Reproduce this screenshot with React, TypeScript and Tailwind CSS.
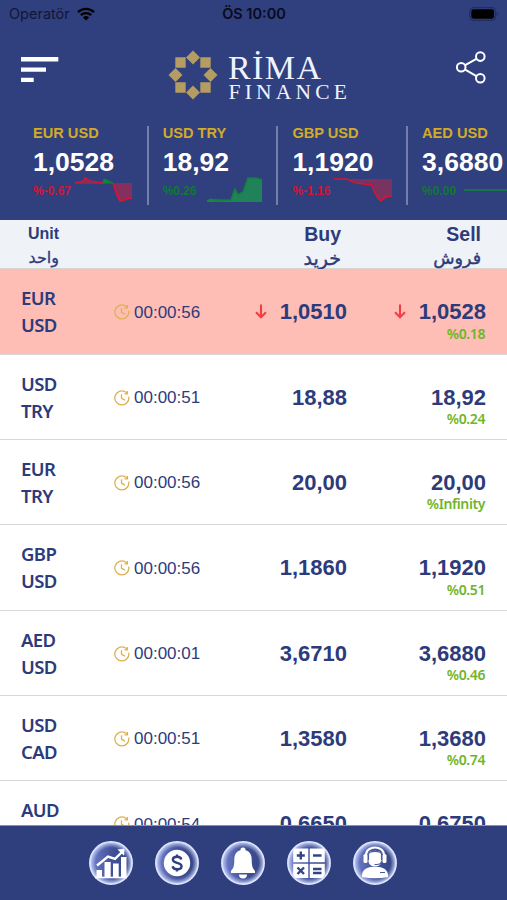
import type { ReactNode } from "react";

const tickers = [
  {
    pair: "EUR USD",
    price: "1,0528",
    change: "%-0.67",
    up: false,
    chart: (
      <>
        <path d="M38 5H57V21L51 21 46 24 42 18Z" fill="#a82a50" fillOpacity=".7" />
        <path d="M0 5 4 4 6 4 8 3 10 0 15 3 28 5 28 6 3 6Z" fill="#c0233f" fillOpacity=".6" />
        <path d="M0 5 5 4 8 3 10 0 15 3 28 5M38 5 42 17 45 23 50 22 53 20 57 21" fill="none" stroke="#d21634" strokeWidth="1.7" />
        <path d="M28 5 29 1 34 3 38 5Z" fill="#128538" stroke="#128538" />
      </>
    ),
  },
  {
    pair: "USD TRY",
    price: "18,92",
    change: "%0.26",
    up: true,
    chart: (
      <>
        <path d="M2 23 6 21 26 22 30 11 33 17 38 14 43 0 57 1 57 24 2 24Z" fill="#1f8259" />
        <path d="M2 23 6 21 9 23 26 22 30 11 33 17 38 14 43 0 51 0 57 2" fill="none" stroke="#128538" strokeWidth="1.5" />
      </>
    ),
  },
  {
    pair: "GBP USD",
    price: "1,1920",
    change: "%-1.16",
    up: false,
    chart: (
      <>
        <path d="M0 1H58V17L53 19 48 23 43 18 39 6 25 5 15 2Z" fill="#9a2d55" fillOpacity=".7" />
        <path d="M0 1 13 1 17 3 22 5 38 7 41 15 44 20 47 23 51 19 58 18" fill="none" stroke="#d21634" strokeWidth="1.7" />
      </>
    ),
  },
  {
    pair: "AED USD",
    price: "3,6880",
    change: "%0.00",
    up: true,
    chart: <path d="M0 12H57" stroke="#128538" strokeWidth="1.3" />,
  },
];

const rates = [
  { from: "EUR", to: "USD", time: "00:00:56", buy: "1,0510", sell: "1,0528", diff: "%0.18", falling: true },
  { from: "USD", to: "TRY", time: "00:00:51", buy: "18,88", sell: "18,92", diff: "%0.24" },
  { from: "EUR", to: "TRY", time: "00:00:56", buy: "20,00", sell: "20,00", diff: "%Infinity" },
  { from: "GBP", to: "USD", time: "00:00:56", buy: "1,1860", sell: "1,1920", diff: "%0.51" },
  { from: "AED", to: "USD", time: "00:00:01", buy: "3,6710", sell: "3,6880", diff: "%0.46" },
  { from: "USD", to: "CAD", time: "00:00:51", buy: "1,3580", sell: "1,3680", diff: "%0.74" },
  { from: "AUD", to: "", time: "00:00:54", buy: "0,6650", sell: "0,6750", diff: "" },
];

function StatusBar() {
  return (
    <div className="grid h-[28px] shrink-0 grid-cols-3 items-center pl-[9px] pr-[7px] text-black">
      <div className="flex items-center gap-[7px]">
        <span className="font-[Inter,sans-serif] text-[14.5px] text-[#111735]">Operatör</span>
        <svg width="18" height="14" viewBox="0 0 18 14" fill="none" stroke="currentColor">
          <path d="M1 5.1a11.5 11.5 0 0 1 16 0" strokeWidth="2.4" />
          <path d="M3.8 8.2a7.5 7.5 0 0 1 10.4 0" strokeWidth="2.3" />
          <path d="M9 13.6 5.9 10.5a4.5 4.5 0 0 1 6.2 0Z" fill="currentColor" stroke="none" />
        </svg>
      </div>
      <div className="pb-px pr-px text-center font-[Inter,sans-serif] text-[14.5px] font-semibold text-[#080b1c]">ÖS 10:00</div>
      <div className="flex justify-end">
        <svg width="31" height="14" viewBox="0 0 31 14">
          <rect x=".7" y=".7" width="26" height="12.6" rx="4" fill="none" stroke="#222d5c" strokeWidth="1.2" />
          <rect x="2.3" y="2.3" width="22.8" height="9.4" rx="2.4" />
          <path d="M28.5 5v4q2-2 0-4" fill="#222d5c" />
        </svg>
      </div>
    </div>
  );
}

function Logo() {
  return (
    <svg width="182" height="54" viewBox="0 0 182 54">
      <g fill="#b49c62">
        <path d="M25 .5 32 7.5 25 14.5 18 7.5Z" />
        <path d="M25 35.5 32 42.5 25 49.5 18 42.5Z" />
        <path d="M7.5 18 14.5 25 7.5 32 .5 25Z" />
        <path d="M42.5 18 49.5 25 42.5 32 35.5 25Z" />
        <path d="M7.3 7.3h10.4v10.4H7.3zM32.3 7.3h10.4v10.4H32.3zM7.3 32.3h10.4v10.4H7.3zM32.3 32.3h10.4v10.4H32.3z" />
      </g>
      <g fill="#f0f3ff" className="font-['Liberation_Serif',serif]">
        <text x="60" y="29" fontSize="34" textLength="93">RİMA</text>
        <text x="60.5" y="49" fontSize="21.5" textLength="118.5">FINANCE</text>
      </g>
    </svg>
  );
}

function Header() {
  return (
    <header className="flex h-[84px] shrink-0 items-start justify-between pl-[21px] pr-[20px] pt-[22px]">
      <svg className="mt-[7px]" width="38" height="26" viewBox="0 0 38 26" fill="#fff">
        <path d="M0 0h37.3v4.6H0zM0 10.4h25v4.4H0zM0 20.7h12.7V25H0z" />
      </svg>
      <div className="ml-[109px]">
        <Logo />
      </div>
      <svg className="ml-auto mt-[1px]" width="31" height="33" viewBox="0 0 31 33" fill="none" stroke="#fff" strokeWidth="2">
        <circle cx="5.2" cy="16.3" r="4.3" />
        <circle cx="24.3" cy="5.6" r="4.3" />
        <circle cx="24.3" cy="27.3" r="4.3" />
        <path d="m9.2 14.1 11.2-6.3M9.2 18.7l11.2 6.4" />
      </svg>
    </header>
  );
}

function TickerStrip() {
  return (
    <div className="flex h-[108px] shrink-0 overflow-hidden pl-[33px] pt-[14px]">
      {tickers.map((t, i) => (
        <div
          key={t.pair}
          className={`h-[79px] shrink-0 ${i > 0 ? "w-[129.7px] border-l-2 border-[#7580aa] pl-[14px]" : "w-[113.7px]"}`}
        >
          <div className="h-[17px] pt-px text-[14.6px] font-bold leading-[13px] text-[#d2ab28]">{t.pair}</div>
          <div className="h-[34px] pt-[4px] text-[26.5px] font-bold leading-[30px] text-white">{t.price}</div>
          <div className="flex h-[26px] items-start">
            <span
              className={`w-[42px] shrink-0 whitespace-nowrap pt-[7px] text-[12px] font-bold leading-[14px] ${t.up ? "text-[#0e7a31]" : "text-[#d21634]"}`}
            >
              {t.change}
            </span>
            <svg className="mt-[1px] shrink-0 overflow-visible" width="58" height="25" viewBox="0 0 58 25">
              {t.chart}
            </svg>
          </div>
        </div>
      ))}
    </div>
  );
}

function TableHead() {
  return (
    <div className="flex h-[49.4px] shrink-0 justify-between border-b border-[#d8d3d0] bg-[#eff2f7] pl-[27px] pr-[26px] font-bold">
      <div className="w-[32px] text-right text-[16px]">
        <div className="h-[27px] leading-[28px]">Unit</div>
        <div
          className="whitespace-nowrap font-['DejaVu_Sans',sans-serif] text-[16px] font-normal leading-[22px] [-webkit-text-stroke:0.3px]"
          dir="rtl"
        >
          واحد
        </div>
      </div>
      <div className="flex">
        <div className="w-[140px] text-right text-[19.5px]">
          <div className="h-[27px] leading-[28px]">Buy</div>
          <div className="font-['DejaVu_Sans',sans-serif] text-[19px] font-normal leading-[22px] [-webkit-text-stroke:0.4px]">خرید</div>
        </div>
        <div className="w-[140px] text-right text-[19.5px]">
          <div className="h-[27px] leading-[28px]">Sell</div>
          <div className="font-['DejaVu_Sans',sans-serif] text-[17.5px] font-normal leading-[22px] [-webkit-text-stroke:0.4px]">فروش</div>
        </div>
      </div>
    </div>
  );
}

function ClockIcon() {
  return (
    <svg width="16" height="16" viewBox="0 0 16 16" fill="none" stroke="#deb052" strokeWidth="1.3">
      <path d="M14.7 6.6A7 7 0 1 1 11 1.7l1.9 1.1M13.4 1v2.8h-3" />
      <path d="M7.5 4.2v4.2l3.5 1.7" />
    </svg>
  );
}

function DownArrow() {
  return (
    <svg width="12" height="16" viewBox="0 0 12 16" fill="none" stroke="#f33d43" strokeWidth="2.1">
      <path d="M6 .5v13M1 8.3l5 5 5-5" />
    </svg>
  );
}

function RateRow({ rate }: { rate: (typeof rates)[number] }) {
  return (
    <div
      className={`flex h-[85.35px] shrink-0 border-b border-[#d6d8da] pl-[21px] pr-[21px] ${rate.falling ? "bg-[#ffbeb5]" : "bg-white"}`}
    >
      <div className="w-[93px] pt-[15px] font-['Noto_Sans',sans-serif] text-[18.5px] font-semibold leading-[27px] tracking-[-0.6px]">
        <div>{rate.from}</div>
        <div>{rate.to}</div>
      </div>
      <div className="flex h-[86px] w-[100px] items-center gap-[4px] text-[17px]">
        <ClockIcon />
        <span>{rate.time}</span>
      </div>
      <div className="flex h-[84.6px] flex-1 items-center justify-end gap-[13px] text-[22px] font-bold">
        {rate.falling && <DownArrow />}
        <span>{rate.buy}</span>
      </div>
      <div className="w-[139px] pt-[29.3px] text-right">
        <div className="flex h-[26px] items-center justify-end gap-[13px] text-[22px] font-bold">
          {rate.falling && <DownArrow />}
          <span>{rate.sell}</span>
        </div>
        <div className="pr-px font-['Noto_Sans',sans-serif] text-[14px] font-semibold leading-[18px] tracking-[-0.4px] text-[#6eb52b]">
          {rate.diff}
        </div>
      </div>
    </div>
  );
}

function NavButton({ children }: { children: ReactNode }) {
  return (
    <button className="h-[46px] w-[46px]">
      <svg width="46" height="46" viewBox="0 0 46 46">
        <defs>
          <linearGradient id="glass" x1="0" x2="1">
            <stop offset="0" stopColor="#7080cb" />
            <stop offset=".5" stopColor="#43539b" />
            <stop offset="1" stopColor="#33427f" />
          </linearGradient>
          <radialGradient id="rim">
            <stop offset=".72" stopColor="#b4c0f2" stopOpacity="0" />
            <stop offset="1" stopColor="#d5ddfa" />
          </radialGradient>
        </defs>
        <circle cx="23" cy="23" r="21.2" fill="url(#glass)" />
        <circle cx="23" cy="23" r="21.2" fill="url(#rim)" stroke="#dde5ff" strokeWidth="1.5" />
        {children}
      </svg>
    </button>
  );
}

function BottomNav() {
  return (
    <nav className="flex h-[75px] shrink-0 gap-[20px] border-t border-[#8990ad] bg-[#2f3f7e] pl-[88px] pt-[14px]">
      <NavButton>
        <g fill="#fff">
          <path d="M8.5 30H14v7H8.5zM16.500 22h6.200v15h-6.200zM25 23.500h5.700V37H25zM33 17h5.500v20H33z" />
          <path d="M7 36.7h32v1.6H7z" />
        </g>
        <path d="M9 25.5 20 16.6l7 2.2 7.5-7.3" fill="none" stroke="#fff" strokeWidth="2.4" />
        <path d="m29.500 9.500 7-.7-.4 7Z" fill="#fff" />
      </NavButton>
      <NavButton>
        <circle cx="23" cy="23" r="13.2" fill="#fff" />
        <path
          d="M27.3 19.6c-.4-2-2-2.8-4.2-2.8-2.5 0-4.2 1.1-4.2 3 0 4.1 8.6 1.9 8.6 6.4 0 2-1.7 3.1-4.4 3.1-2.5 0-4.2-1.1-4.5-3.1M23 14.5v2.5M23 29v2.5"
          fill="none"
          stroke="#303f7d"
          strokeWidth="2.4"
        />
      </NavButton>
      <NavButton>
        <g fill="#fff">
          <path d="M23 7.5a2.5 2.5 0 0 1 2.5 2.7c4.5 1.3 6.2 4.8 6.2 9.3 0 7 1 9 3.3 11.3V33H11v-2.2c2.3-2.3 3.3-4.3 3.3-11.3 0-4.5 1.7-8 6.2-9.3A2.5 2.5 0 0 1 23 7.5Z" />
          <path d="M19 34.5h8a4 4 0 0 1-8 0Z" />
        </g>
      </NavButton>
      <NavButton>
        <path
          d="M8 8.5h14.3v13.8H7.2V10ZM23.7 8.5H38l.8 2v11.8H23.7ZM7.2 23.7h15.1V38H9.5L7.2 35ZM23.7 23.7h15.1V35L36.5 38H23.7Z"
          fill="#fff"
        />
        <path
          d="M14.8 11.5v8M10.8 15.5h8M27 15.5h8.5M11.5 27.5l6.5 6.5M18 27.5 11.5 34M27 29h8.5M27 33h8.5"
          stroke="#344482"
          strokeWidth="2.4"
        />
      </NavButton>
      <NavButton>
        <g fill="#fff">
          <path d="M10 37c-.5-6 3-9 8.5-10h9c5.5 1 9 4 8.5 10q-13 2.5-26 0Z" />
          <path d="M16.5 13c1.5-3 11.5-3 13 0v7.5c0 4-3 6-6.5 6s-6.5-2-6.5-6Z" />
          <rect x="11.5" y="14" width="4" height="9" rx="1.6" />
          <rect x="30.5" y="14" width="4" height="9" rx="1.6" />
        </g>
        <path d="M14 15C14 5 32 5 32 15" fill="none" stroke="#fff" strokeWidth="2" />
        <path d="M29.5 21c0 2-2 3.500-5 3.500h-2M16.500 20v-6c1-3.500 12-3.500 13 0v6M28 32.500h5" fill="none" stroke="#4a5a9e" strokeWidth="1.1" />
      </NavButton>
    </nav>
  );
}

export default function App() {
  return (
    <div className="flex h-[900px] w-[507px] flex-col overflow-hidden bg-[#303f7e] font-['Liberation_Sans',sans-serif] text-[#2d3b7b]">
      <StatusBar />
      <Header />
      <TickerStrip />
      <TableHead />
      <main className="min-h-0 flex-1 overflow-hidden bg-white">
        {rates.map((rate, i) => (
          <RateRow key={i} rate={rate} />
        ))}
      </main>
      <BottomNav />
    </div>
  );
}
